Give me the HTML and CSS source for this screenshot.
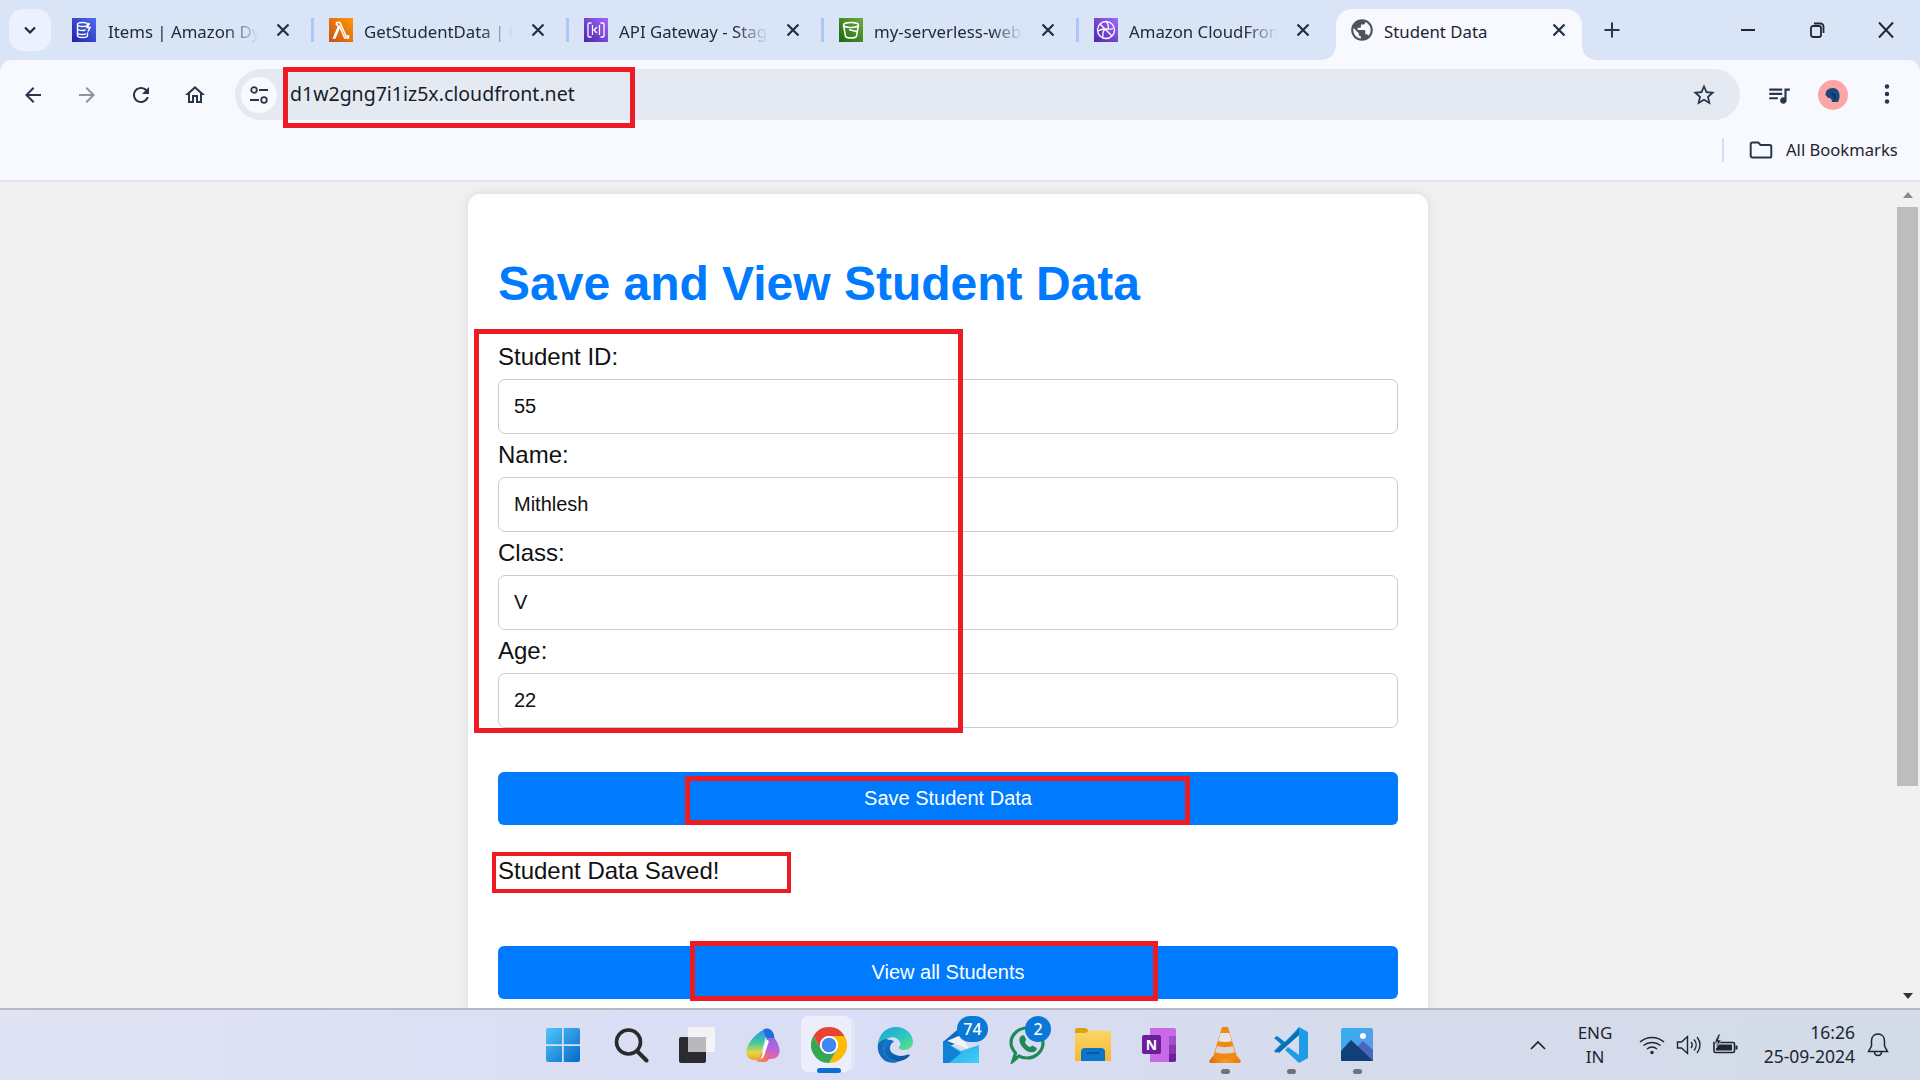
FILE: index.html
```html
<!DOCTYPE html>
<html lang="en">
<head>
<meta charset="utf-8">
<title>Student Data</title>
<link rel="stylesheet" href="styles.css">
</head>
<body>
<svg class="defs" width="0" height="0" aria-hidden="true">
  <defs>
    <linearGradient id="gWin" x1="0" y1="0" x2="1" y2="1"><stop offset="0" stop-color="#4fc6fb"/><stop offset="1" stop-color="#0569c8"/></linearGradient>
    <linearGradient id="gEdgeTop" x1="0" y1="0" x2="1" y2="1"><stop offset="0" stop-color="#1ba3d8"/><stop offset=".6" stop-color="#2fc9c0"/><stop offset="1" stop-color="#6fe06a"/></linearGradient>
    <linearGradient id="gEdgeLow" x1="0" y1="0" x2="1" y2="1"><stop offset="0" stop-color="#0f7fd0"/><stop offset="1" stop-color="#0b4f9e"/></linearGradient>
    <linearGradient id="gCopL" x1="0" y1="0" x2="0" y2="1"><stop offset="0" stop-color="#2a9be0"/><stop offset=".4" stop-color="#3cc8a0"/><stop offset=".75" stop-color="#e8d840"/><stop offset="1" stop-color="#f0a030"/></linearGradient>
    <linearGradient id="gCopR" x1="0" y1="0" x2="0" y2="1"><stop offset="0" stop-color="#8a6ae8"/><stop offset=".6" stop-color="#c060d8"/><stop offset="1" stop-color="#e868a8"/></linearGradient>
    <linearGradient id="gCopB" x1="0" y1="0" x2="1" y2="0"><stop offset="0" stop-color="#f2a058"/><stop offset="1" stop-color="#e8587a"/></linearGradient>
    <linearGradient id="gMail" x1="0" y1="0" x2="1" y2="1"><stop offset="0" stop-color="#1c9ee8"/><stop offset="1" stop-color="#43d0f7"/></linearGradient>
    <linearGradient id="gFolder" x1="0" y1="0" x2="0" y2="1"><stop offset="0" stop-color="#fbd667"/><stop offset="1" stop-color="#f6b92e"/></linearGradient>
    <linearGradient id="gCone" x1="0" y1="0" x2="1" y2="0"><stop offset="0" stop-color="#e06a08"/><stop offset=".5" stop-color="#fb9a1c"/><stop offset="1" stop-color="#e87a0c"/></linearGradient>
    <linearGradient id="gPhoto" x1="0" y1="0" x2="1" y2="1"><stop offset="0" stop-color="#2bb4ee"/><stop offset="1" stop-color="#6f8ee8"/></linearGradient>
  </defs>
</svg>

<div class="window">
  <header class="tabstrip">
    <button class="tabsearch" type="button">
      <svg width="14" height="14" viewBox="0 0 14 14"><path d="M2 4.500l5 5 5-5" fill="none" stroke="#1f2a3a" stroke-width="2.200"/></svg>
    </button>

    <div class="tab tab-first">
      <span class="favicon fav-dynamo"><svg width="24" height="24" viewBox="0 0 24 24" fill="none" stroke="#fff" stroke-width="1.400"><ellipse cx="10.500" cy="6.500" rx="5" ry="2"/><path d="M5.500 6.500v11c0 1.100 2.200 2 5 2s5-.9 5-2v-3M5.500 10.500c0 1.100 2.200 2 5 2 1.200 0 2-.2 3-.5M5.500 14.500c0 1.100 2.200 2 5 2 1.500 0 2.500-.2 3.500-.7"/><path d="M17.500 5l-2.500 4.500h3L16 13.500" stroke-width="1.600"/></svg></span>
      <span class="tabtitle">Items | Amazon DynamoDB</span>
      <svg class="tabclose" width="20" height="20" viewBox="0 0 20 20"><path d="M4.500 4.500l11 11M15.500 4.500l-11 11" stroke="#1f2f45" stroke-width="2.200"/></svg>
      <i class="tabsep"></i>
    </div>

    <div class="tab">
      <span class="favicon fav-lambda"><svg width="24" height="24" viewBox="0 0 24 24" fill="none" stroke="#fff" stroke-width="1.500"><path d="M7.500 4.500h3.500l6 13.500h2.500v2h-3.800l-5-11.500-4.700 11.500H4.500L9.300 9 8.200 6.500H7.500z"/></svg></span>
      <span class="tabtitle">GetStudentData | Functions</span>
      <svg class="tabclose" width="20" height="20" viewBox="0 0 20 20"><path d="M4.500 4.500l11 11M15.500 4.500l-11 11" stroke="#1f2f45" stroke-width="2.200"/></svg>
      <i class="tabsep"></i>
    </div>

    <div class="tab">
      <span class="favicon fav-api"><svg width="24" height="24" viewBox="0 0 24 24" fill="none" stroke="#fff" stroke-width="1.300"><path d="M7.500 5H5l-1 1v12l1 1h2.500M16.500 5H19l1 1v12l-1 1h-2.500M8.500 7v10M15.500 7v10M13 9l-3 3 3 3"/></svg></span>
      <span class="tabtitle">API Gateway - Stages</span>
      <svg class="tabclose" width="20" height="20" viewBox="0 0 20 20"><path d="M4.500 4.500l11 11M15.500 4.500l-11 11" stroke="#1f2f45" stroke-width="2.200"/></svg>
      <i class="tabsep"></i>
    </div>

    <div class="tab">
      <span class="favicon fav-s3"><svg width="24" height="24" viewBox="0 0 24 24" fill="none" stroke="#fff" stroke-width="1.500"><ellipse cx="12" cy="7" rx="7.500" ry="2.500"/><path d="M4.500 7l2 11c.3 1.300 2.500 2 5.500 2s5.200-.7 5.500-2l2-11M10 11.500l9 2.500"/></svg></span>
      <span class="tabtitle">my-serverless-website-bucket</span>
      <svg class="tabclose" width="20" height="20" viewBox="0 0 20 20"><path d="M4.500 4.500l11 11M15.500 4.500l-11 11" stroke="#1f2f45" stroke-width="2.200"/></svg>
      <i class="tabsep"></i>
    </div>

    <div class="tab tab-last">
      <span class="favicon fav-cf"><svg width="24" height="24" viewBox="0 0 24 24" fill="none" stroke="#fff" stroke-width="1.300"><circle cx="12" cy="12" r="8.500"/><path d="M6 6l12 12M9 19c-1-4 1-8 3-8s6 1 7-1M12 3.500c2 2 3 4 2 7M4 13c3-2 5-2 7-2"/></svg></span>
      <span class="tabtitle">Amazon CloudFront</span>
      <svg class="tabclose" width="20" height="20" viewBox="0 0 20 20"><path d="M4.500 4.500l11 11M15.500 4.500l-11 11" stroke="#1f2f45" stroke-width="2.200"/></svg>
    </div>

    <div class="tab tab-active">
      <svg class="globe" width="26" height="26" viewBox="0 0 24 24"><path fill="#4f545b" d="M12 2C6.480 2 2 6.480 2 12s4.480 10 10 10 10-4.480 10-10S17.520 2 12 2zm-1 17.930c-3.950-.490-7-3.850-7-7.930 0-.620.080-1.210.210-1.790L9 15v1c0 1.100.900 2 2 2v1.930zm6.900-2.540c-.260-.810-1-1.390-1.900-1.390h-1v-3c0-.550-.450-1-1-1H8v-2h2c.550 0 1-.450 1-1V7h2c1.100 0 2-.900 2-2v-.410c2.930 1.190 5 4.060 5 7.410 0 2.080-.800 3.970-2.100 5.390z"/></svg>
      <span class="tabtitle tabtitle-active">Student Data</span>
      <svg class="tabclose tabclose-active" width="20" height="20" viewBox="0 0 20 20"><path d="M4.500 4.500l11 11M15.500 4.500l-11 11" stroke="#1f2f45" stroke-width="2.200"/></svg>
    </div>

    <svg class="newtab" width="24" height="24" viewBox="0 0 24 24"><path d="M12 4.500v15M4.500 12h15" stroke="#27364a" stroke-width="2"/></svg>

    <div class="wincontrols">
      <span class="winbtn"><svg width="16" height="16" viewBox="0 0 16 16"><path d="M1 8h14" stroke="#1d2733" stroke-width="2"/></svg></span>
      <span class="winbtn"><svg width="18" height="18" viewBox="0 0 18 18" fill="none" stroke="#1d2733" stroke-width="1.800"><rect x="3" y="5" width="10" height="11" rx="2"/><path d="M6 2.500h6.500a3 3 0 0 1 3 3V12"/></svg></span>
      <span class="winbtn"><svg width="18" height="18" viewBox="0 0 18 18"><path d="M2 1.500l14 15M16 1.500l-14 15" stroke="#1d2733" stroke-width="1.900"/></svg></span>
    </div>
  </header>

  <div class="toolbar">
    <span class="navbtn"><svg width="24" height="24" viewBox="0 0 24 24"><path fill="#27364a" d="M20 11H7.830l5.590-5.590L12 4l-8 8 8 8 1.410-1.410L7.830 13H20v-2z"/></svg></span>
    <span class="navbtn"><svg width="24" height="24" viewBox="0 0 24 24"><path fill="#8f949b" d="M12 4l-1.410 1.410L16.170 11H4v2h12.170l-5.580 5.590L12 20l8-8z"/></svg></span>
    <span class="navbtn"><svg width="24" height="24" viewBox="0 0 24 24"><path fill="#27364a" d="M17.650 6.350C16.200 4.900 14.210 4 12 4c-4.420 0-7.990 3.580-7.990 8s3.570 8 7.990 8c3.730 0 6.840-2.550 7.730-6h-2.080c-.820 2.330-3.040 4-5.650 4-3.310 0-6-2.690-6-6s2.690-6 6-6c1.660 0 3.140.690 4.220 1.780L13 11h7V4l-2.350 2.350z"/></svg></span>
    <span class="navbtn"><svg width="24" height="24" viewBox="0 0 24 24"><path fill="#27364a" d="M12 5.690l5 4.500V18h-2v-6H9v6H7v-7.810l5-4.500M12 3L2 12h3v8h6v-6h2v6h6v-8h3L12 3z"/></svg></span>

    <div class="omnibox">
      <span class="siteinfo"><svg width="22" height="22" viewBox="0 0 22 22" fill="none" stroke="#27364a" stroke-width="1.800"><circle cx="6" cy="6" r="2.800"/><path d="M11 6h9M2 16h9"/><circle cx="16" cy="16" r="2.800"/></svg></span>
      <span class="url">d1w2gng7i1iz5x.cloudfront.net</span>
      <svg class="star" width="26" height="26" viewBox="0 0 24 24"><path fill="#27364a" d="M22 9.240l-7.190-.620L12 2 9.190 8.630 2 9.240l5.460 4.730L5.820 21 12 17.270 18.180 21l-1.630-7.030L22 9.240zM12 15.400l-3.760 2.270 1-4.280-3.320-2.880 4.380-.380L12 6.100l1.710 4.040 4.380.380-3.320 2.880 1 4.280L12 15.400z"/></svg>
    </div>

    <svg class="queue" width="26" height="26" viewBox="0 0 24 24"><path fill="#27364a" d="M15 6H3v2h12V6zm0 4H3v2h12v-2zM3 16h8v-2H3v2zM17 6v8.180c-.310-.110-.650-.180-1-.180-1.660 0-3 1.340-3 3s1.340 3 3 3 3-1.340 3-3V8h3V6h-5z"/></svg>
    <span class="avatar"><svg width="30" height="30" viewBox="0 0 30 30"><circle cx="15" cy="15" r="15" fill="#fba5a5"/><path fill="#174a7c" d="M8 12c1-3 4-4 7-4 4 0 6 3 6.500 6.500.3 3-.5 6-1.500 7.500h-6c0-2-1-3-2-4-1 0-2 0-3-1 0-1-1-1.500-1.500-2 0-1 0-2 .5-3z"/><path fill="#0d2f52" d="M14 13c2 0 4 2 4 5l-2 2c0-3-1-5-3-6z"/></svg></span>
    <svg class="kebab" width="6" height="24" viewBox="0 0 6 24" fill="#27364a"><circle cx="3" cy="4.500" r="2.200"/><circle cx="3" cy="12" r="2.200"/><circle cx="3" cy="19.500" r="2.200"/></svg>
  </div>

  <div class="bookmarks">
    <i class="bmsep"></i>
    <svg class="bmfolder" width="26" height="26" viewBox="0 0 24 24" fill="none" stroke="#27364a" stroke-width="1.800"><path d="M2.500 6.500a1.500 1.500 0 0 1 1.500-1.500h5.500l2 2.300H20a1.500 1.500 0 0 1 1.500 1.500v8.700a1.500 1.500 0 0 1-1.500 1.500H4a1.500 1.500 0 0 1-1.500-1.500z"/></svg>
    <span class="bmlabel">All Bookmarks</span>
  </div>

  <div class="content">
    <main class="viewport">
      <section class="card">
        <h1 class="title">Save and View Student Data</h1>
        <form class="form">
          <label class="field-label">Student ID:</label>
          <input class="field-input" type="text" value="55">
          <label class="field-label">Name:</label>
          <input class="field-input" type="text" value="Mithlesh">
          <label class="field-label">Class:</label>
          <input class="field-input" type="text" value="V">
          <label class="field-label">Age:</label>
          <input class="field-input" type="text" value="22">
          <button class="primary primary-save" type="button">Save Student Data</button>
        </form>
        <p class="status">Student Data Saved!</p>
        <button class="primary" type="button">View all Students</button>
      </section>
    </main>
    <aside class="scrollbar">
      <i class="arrow-up"></i>
      <div class="thumb"></div>
      <i class="arrow-down"></i>
    </aside>
  </div>

  <footer class="taskbar">
    <div class="pinned">
      <span class="pin pin-start"><svg width="36" height="36" viewBox="0 0 36 36"><path fill="url(#gWin)" d="M1 3a2 2 0 0 1 2-2h14v16.300H1zM18.700 1H33a2 2 0 0 1 2 2v14.300H18.700zM1 19h16v16H3a2 2 0 0 1-2-2zM18.700 19H35v14a2 2 0 0 1-2 2H18.700z"/></svg></span>
      <span class="pin"><svg width="36" height="36" viewBox="0 0 36 36" fill="none" stroke="#2a2a2c" stroke-linecap="round"><circle cx="15.500" cy="15" r="12" stroke-width="3.600"/><path d="M24.500 24.500l9 9" stroke-width="4"/></svg></span>
      <span class="pin"><svg width="38" height="38" viewBox="0 0 38 38"><rect x="1" y="11" width="27" height="26" rx="2" fill="#2b2b2d"/><rect x="10" y="1" width="27" height="25" rx="2" fill="#f3f3f5"/><rect x="10" y="11" width="18" height="15" fill="#b9b9bc"/></svg></span>
      <span class="pin"><svg width="36" height="36" viewBox="0 0 36 36"><path fill="url(#gCopR)" d="M22 10h6c3 2 6 8 6.500 13 .4 5-3 9-8 9H18z"/><path fill="url(#gCopB)" d="M14 26h12l-2 6c-1 2-3 3-5 3h-5c-3 0-4-3-3-5z"/><path fill="url(#gCopL)" d="M15 5c2-2 5-2 7 0l-6 22c-1 4-4 6-7 6-5 0-8-4-7.500-9S6 11 15 5z"/><path fill="#1d6fe0" d="M18 3c2-2 6-2 8 0 2 1.500 3 4 3.500 8H21z"/><path fill="#fff" d="M22 13c1.500 0 2 1 1.500 2.500L19 29c-.5 1.500-2 2.500-4 3 1-1 1.500-2 2-3.500l3-12c.3-1.500 1-3.500 2-3.500z"/></svg></span>
      <span class="pin pin-active">
        <svg width="36" height="36" viewBox="0 0 36 36"><path fill="#ea4335" d="M33.590 9A18 18 0 0 0 2.410 9L10.200 22.500A9 9 0 0 1 18 9z"/><path fill="#fbbc04" transform="rotate(120 18 18)" d="M33.590 9A18 18 0 0 0 2.410 9L10.200 22.500A9 9 0 0 1 18 9z"/><path fill="#34a853" transform="rotate(240 18 18)" d="M33.590 9A18 18 0 0 0 2.410 9L10.200 22.500A9 9 0 0 1 18 9z"/><circle cx="18" cy="18" r="9" fill="#fff"/><circle cx="18" cy="18" r="7.300" fill="#4285f4"/></svg>
        <i class="pin-bar"></i>
      </span>
      <span class="pin"><svg width="36" height="36" viewBox="0 0 36 36"><path fill="url(#gEdgeTop)" d="M1 17C2 7 9 0 19 0c10 0 17 7 17 15 0 5-4 8-9 8-3 0-6-1-5-3 1-1 2-3 1-5-2-4-7-6-11-4C7 13 3 14 1 17z"/><path fill="url(#gEdgeLow)" d="M1 17c2-3 6-5 10-5-4 3-5 8-4 13 2 6 9 10 16 9 4-.5 8-3 10-6l-2-.5c-5 2-11 2-15-1-3-2-4-6-2-9 1-2 2-2.500 3-3-2-2-6-2-9-1-3 1-6 2-7 4z"/><path fill="#0f6cbd" d="M1 17c-1 6 1 12 6 16 4 3 11 4 16 1-7 1-14-3-16-9-1-5 0-10 4-13-4 0-8 2-10 5z"/></svg></span>
      <span class="pin"><svg width="36" height="36" viewBox="0 0 36 36"><path fill="#0f6cbd" d="M0 15L14 3l8 8-22 12z"/><path fill="#f3f3f3" d="M4 14l14-6 8 14z"/><path fill="url(#gMail)" d="M0 14l18 10 18-6v18H0z"/><path fill="#1181d8" d="M0 36V14l18 12-12 10z"/></svg><b class="badge badge-wide">74</b></span>
      <span class="pin"><svg width="38" height="38" viewBox="0 0 38 38" fill="none" stroke="#1f8a58" stroke-width="3.200"><path d="M5 35l2.500-8C5 24 3 20 3 17 3 9 10 2 19 2s16 7 16 15-7 15-16 15c-3 0-6-.7-8-2z"/><path fill="#1f8a58" stroke="none" d="M13 10c1-1 3-1 3.500 0l1.500 3.500c.3 1-.5 1.500-1 2.500-.3 1 3 4.500 5 5 1 0 1.500-1.500 2.500-1.500l3.500 2c1 .500 1 2 0 3-2 2-5 2.500-8 1-4-2-7.500-6-8.500-10-.5-2.500 0-4 1.500-5.500z"/></svg><b class="badge">2</b></span>
      <span class="pin"><svg width="36" height="36" viewBox="0 0 36 36"><path fill="#dda20d" d="M0 3a2 2 0 0 1 2-2h9l5 5h-16z"/><path fill="url(#gFolder)" d="M0 6.500l11-.5 3-2.500h20a2 2 0 0 1 2 2V34H0z"/><path fill="#0a75c9" d="M6 34v-9a4 4 0 0 1 4-4h16a4 4 0 0 1 4 4v9z"/><path stroke="#084f95" stroke-width="1.600" d="M12 26h12"/></svg></span>
      <span class="pin"><svg width="36" height="36" viewBox="0 0 36 36"><path fill="#c86ae6" d="M9 1h24a2 2 0 0 1 2 2v30a2 2 0 0 1-2 2H9z"/><path fill="#a64ec9" d="M28 9h7v9h-7z"/><path fill="#8a34b0" d="M28 18h7v9h-7z"/><path fill="#6f1f98" d="M28 27h7v6a2 2 0 0 1-2 2h-5z"/><rect x="1" y="8" width="19" height="19" rx="2" fill="#6c1d9a"/><text x="10.500" y="22.500" class="onenote-n">N</text></svg></span>
      <span class="pin pin-open"><svg width="32" height="38" viewBox="0 0 32 38"><path fill="url(#gCone)" d="M0 35l4-5 5-2h14l5 2 4 5-1 2H1z"/><path fill="#f08a12" d="M13 1h6l9 30c-4 3-20 3-24 0z"/><path fill="#e6e6e6" d="M11.500 7h9l2.200 8c-3 1.300-10.400 1.300-13.400 0z"/><path fill="#d8d8d8" d="M8 20c4 1.500 12 1.500 16 0l1.800 6c-4 2-15.600 2-19.600 0z"/></svg><i class="pin-dot"></i></span>
      <span class="pin pin-open"><svg width="36" height="36" viewBox="0 0 36 36"><path fill="#0f7cc3" d="M1 11l3-2 8 6 9-8-1 6-8 6-9 7-2-2 7-7-7-6z"/><path fill="#1f9ce8" d="M26 0l9 5v26l-9 5-14-13 3-3 11 8V8L14 18l-2-3z"/><path fill="#0a6fb4" d="M26 0v8L6 26l-3-2 21-20z"/></svg><i class="pin-dot"></i></span>
      <span class="pin pin-open"><svg width="36" height="36" viewBox="0 0 36 36"><rect x="2" y="1" width="32" height="33" rx="2" fill="url(#gPhoto)"/><circle cx="24" cy="9" r="3" fill="#fff"/><path fill="#4a66bd" d="M16 22l8-8 10 9v11H16z"/><path fill="#123f78" d="M2 24l10-11 15 14 7 7H3a1 1 0 0 1-1-1z"/></svg><i class="pin-dot"></i></span>
    </div>

    <div class="tray">
      <svg class="tray-chevron" width="18" height="12" viewBox="0 0 18 12"><path d="M2 10l7-7 7 7" fill="none" stroke="#1c2530" stroke-width="1.700"/></svg>
      <div class="tray-lang"><span>ENG</span><span>IN</span></div>
      <svg class="tray-wifi" width="26" height="22" viewBox="0 0 26 22" fill="none" stroke="#1c2530" stroke-width="1.500"><path d="M1 8c7-6 17-6 24 0M4.500 11.500c5-4 12-4 17 0M8 15c3-2.500 7-2.500 10 0"/><circle cx="13" cy="18.500" r="1.700" fill="#1c2530" stroke="none"/></svg>
      <svg class="tray-sound" width="26" height="22" viewBox="0 0 26 22" fill="none" stroke="#1c2530" stroke-width="1.400"><path d="M1.500 8h4l6-5.500v17l-6-5.500h-4z"/><path d="M15 8c1.500 1.800 1.500 4.200 0 6M18 5.500c2.800 3.300 2.800 7.700 0 11M21 3c4 4.800 4 11.200 0 16"/></svg>
      <svg class="tray-battery" width="26" height="24" viewBox="0 0 26 24"><path fill="none" stroke="#1c2530" stroke-width="1.600" d="M2 9.500h19a1.500 1.500 0 0 1 1.500 1.500v7a1.500 1.500 0 0 1-1.500 1.500H3.500A1.500 1.500 0 0 1 2 18z"/><path fill="#1c2530" d="M4 11.500h16v6H4zM23.500 12.500H25.500v4h-2z"/><path fill="#1c2530" stroke="#d4dbe8" stroke-width=".8" d="M6.500 1L2.500 9h3l-1.500 6 5.500-8h-3l2-6z"/></svg>
      <div class="tray-clock"><span>16:26</span><span>25-09-2024</span></div>
      <svg class="tray-bell" width="24" height="26" viewBox="0 0 24 26" fill="none" stroke="#1c2530" stroke-width="1.500"><path d="M12 2c-4 0-6.500 3-6.500 7v5L2.500 19.500h19L18.500 14V9c0-4-2.500-7-6.500-7z"/><path d="M8.500 19.500c0 2.300 1.500 4 3.500 4s3.500-1.700 3.500-4"/></svg>
    </div>
  </footer>

  <div class="mark mark-url"></div>
  <div class="mark mark-form"></div>
  <div class="mark mark-save"></div>
  <div class="mark mark-status"></div>
  <div class="mark mark-view"></div>
</div>
</body>
</html>
```

FILE: styles.css
```css
* { box-sizing: border-box; }
html, body { margin: 0; padding: 0; height: 100%; overflow: hidden; }
body { font-family: "Noto Sans", "Open Sans", sans-serif; color: #1f2937; }
.defs { position: absolute; }
i { display: block; }

.window { position: relative; width: 1920px; height: 1080px; display: flex; flex-direction: column; background: #d9e4f7; overflow: hidden; }

/* tab strip */
.tabstrip { height: 60px; flex: none; display: flex; align-items: stretch; padding: 9px 0 0 9px; background: #d9e4f7; }
.tabsearch { width: 42px; height: 42px; margin-right: 6px; border: 0; border-radius: 14px; background: #ebf1fd; display: flex; align-items: center; justify-content: center; padding: 0; }
.tab { width: 255px; height: 51px; padding: 0 0 9px 15px; display: flex; align-items: center; font-size: 16.800px; color: #202b3c; }
.tab-first { width: 257px; }
.tab-first .tabtitle { width: 150px; margin-left: 12px; }
.tab-last { width: 257px; }
.favicon { width: 24px; height: 24px; flex: none; display: block; }
.favicon svg { display: block; }
.fav-dynamo { background: linear-gradient(45deg, #1e22a8, #4f6ef0); }
.fav-lambda { background: linear-gradient(45deg, #c8511b, #ff9900); }
.fav-api { background: linear-gradient(45deg, #4d27a8, #a166ff); }
.fav-s3 { background: linear-gradient(45deg, #1b660f, #6cae3e); }
.fav-cf { background: linear-gradient(45deg, #4d27a8, #a166ff); }
.tabtitle { width: 149px; margin-left: 11px; flex: none; white-space: nowrap; overflow: hidden; line-height: 24px; position: relative; top: 2px; -webkit-mask-image: linear-gradient(to right, #000 78%, transparent 100%); mask-image: linear-gradient(to right, #000 78%, transparent 100%); }
.tabclose { flex: none; margin-left: 15px; }
.tabsep { width: 3px; height: 24px; margin-left: auto; background: #a9c8f5; }
.tab-active { width: 246px; padding-left: 13px; border-radius: 16px 16px 0 0; background: #f8f9ff; position: relative; }
.tab-active::before, .tab-active::after { content: ""; position: absolute; bottom: 0; width: 14px; height: 14px; }
.tab-active::before { left: -14px; background: radial-gradient(circle at 0 0, transparent 13.500px, #f8f9ff 14px); }
.tab-active::after { right: -14px; background: radial-gradient(circle at 100% 0, transparent 13.500px, #f8f9ff 14px); }
.globe { flex: none; }
.tabtitle-active { width: 165px; margin-left: 9px; -webkit-mask-image: none; mask-image: none; color: #1d2430; }
.tabclose-active { margin-left: 0; }
.newtab { margin: 9px 0 0 18px; flex: none; }
.wincontrols { margin-left: auto; margin-top: -9px; display: flex; }
.winbtn { width: 69px; height: 60px; display: flex; align-items: center; justify-content: center; }

/* toolbar */
.toolbar { height: 69px; flex: none; display: flex; align-items: flex-start; padding: 9px 0 0 6px; background: #f8f9ff; border-radius: 12px 12px 0 0; }
.navbtn { width: 54px; height: 51px; flex: none; display: flex; align-items: center; justify-content: center; }
.omnibox { width: 1505px; height: 51px; margin-left: 13px; flex: none; border-radius: 26px; background: #e5e9f2; display: flex; align-items: center; padding: 0 0 0 6px; }
.siteinfo { width: 36px; height: 36px; border-radius: 50%; background: #f8f9ff; display: flex; align-items: center; justify-content: center; flex: none; }
.url { margin-left: 13px; padding-bottom: 2px; font-size: 19.500px; color: #161d29; white-space: nowrap; }
.star { margin-left: auto; margin-right: 23px; flex: none; }
.queue { margin: 13px 0 0 26px; flex: none; }
.avatar { margin: 11px 0 0 26px; width: 30px; height: 30px; flex: none; }
.avatar svg { display: block; }
.kebab { margin: 13px 0 0 36px; flex: none; }

/* bookmarks */
.bookmarks { height: 53px; flex: none; display: flex; align-items: flex-start; justify-content: flex-end; padding: 9px 22px 0 0; background: #f8f9ff; border-bottom: 2px solid #dfe3ea; }
.bmsep { width: 2px; height: 24px; background: #cfe0f7; }
.bmfolder { margin: -1px 0 0 24px; flex: none; }
.bmlabel { margin-left: 12px; width: 112px; font-size: 16.600px; line-height: 24px; white-space: nowrap; color: #1d2430; }

/* page */
.content { flex: 1; min-height: 0; display: flex; background: #f1f1f1; }
.viewport { flex: 1; min-width: 0; overflow: hidden; padding-top: 12px; font-family: "Liberation Sans", Arial, sans-serif; color: #111; }
.card { width: 960px; margin: 0 auto; padding: 30px; border-radius: 12px; background: #fff; box-shadow: 0 0 12px rgba(0, 0, 0, .1); }
.title { margin: 32px 0; font-size: 48px; line-height: 55px; font-weight: 700; color: #007bff; }
.form { display: block; }
.field-label { display: block; height: 27.600px; margin-bottom: 8px; font-size: 24px; line-height: 27.600px; }
.field-input { display: block; width: 100%; height: 55px; margin-bottom: 7.400px; padding: 0 15px; border: 1.500px solid #ccc; border-radius: 7px; background: #fff; font: 20px "Liberation Sans", Arial, sans-serif; color: #111; }
.primary { display: block; width: 100%; height: 53px; border: 0; border-radius: 6px; background: #007bff; color: #fff; font: 20px "Liberation Sans", Arial, sans-serif; }
.primary-save { margin-top: 44.500px; }
.status { margin: 32px 0 60.500px; font-size: 24px; line-height: 28px; }

/* scrollbar */
.scrollbar { width: 24px; flex: none; padding: 10px 2px 0 1px; display: flex; flex-direction: column; align-items: center; background: #f1f1f1; }
.arrow-up { width: 0; height: 0; border-left: 5.500px solid transparent; border-right: 5.500px solid transparent; border-bottom: 6px solid #8a8a8a; }
.thumb { width: 21px; height: 579px; margin-top: 9px; background: #bdbdbd; }
.arrow-down { width: 0; height: 0; margin-top: 207px; border-left: 5.500px solid transparent; border-right: 5.500px solid transparent; border-top: 6px solid #333; }

/* taskbar */
.taskbar { height: 72px; flex: none; display: flex; align-items: stretch; padding-left: 532px; border-top: 2px solid #b6b9c2; background: linear-gradient(to right, #dfe3f3 0%, #d9ddf5 45%, #d6dbec 70%, #d3dbe8 100%); }
.pinned { display: flex; flex: none; }
.pin { width: 66px; height: 70px; flex: none; position: relative; display: flex; align-items: center; justify-content: center; }
.pin svg { display: block; position: relative; }
.pin-start { padding-right: 4px; }
.pin-active::before { content: ""; position: absolute; left: 5px; right: 11px; top: 6px; bottom: 8px; border-radius: 7px; background: #eceffb; box-shadow: 5px 0 0 -1px #e3e6f6; }
.pin-bar { position: absolute; left: 21px; bottom: 7px; width: 24px; height: 5px; border-radius: 3px; background: #0a6fd0; }
.pin-dot { position: absolute; left: 29px; bottom: 6px; width: 9px; height: 5px; border-radius: 3px; background: #6f7378; }
.badge { position: absolute; top: 6px; left: 31px; min-width: 26px; height: 26px; padding: 0 2px; border-radius: 13px; background: #0a78d7; color: #fff; font: 500 16px/26px "Noto Sans", sans-serif; text-align: center; }
.badge-wide { min-width: 31px; left: 29px; }
.onenote-n { font: 700 14px "Noto Sans", sans-serif; fill: #fff; text-anchor: middle; }

.tray { margin-left: auto; padding-right: 30px; display: flex; align-items: center; color: #1c2530; font-size: 17.500px; }
.tray-chevron { flex: none; }
.tray-lang { width: 40px; margin-left: 28px; display: flex; flex-direction: column; align-items: center; line-height: 24px; font-size: 17px; }
.tray-wifi { margin-left: 24px; flex: none; }
.tray-sound { margin-left: 11px; flex: none; }
.tray-battery { margin-left: 10px; flex: none; }
.tray-clock { width: 100px; margin: -2px 0 0 17px; display: flex; flex-direction: column; align-items: flex-end; line-height: 24px; white-space: nowrap; }
.tray-bell { margin-left: 11px; flex: none; }

/* red annotation boxes lying over the screenshot */
.mark { position: absolute; border: 5px solid #ed1c24; pointer-events: none; }
.mark-url { left: 283px; top: 67px; width: 352px; height: 61px; }
.mark-form { left: 474px; top: 329px; width: 489px; height: 404px; }
.mark-save { left: 685px; top: 776px; width: 505px; height: 49px; }
.mark-status { left: 492px; top: 852px; width: 299px; height: 41px; border-width: 4px; }
.mark-view { left: 690px; top: 941px; width: 468px; height: 60px; }
```
